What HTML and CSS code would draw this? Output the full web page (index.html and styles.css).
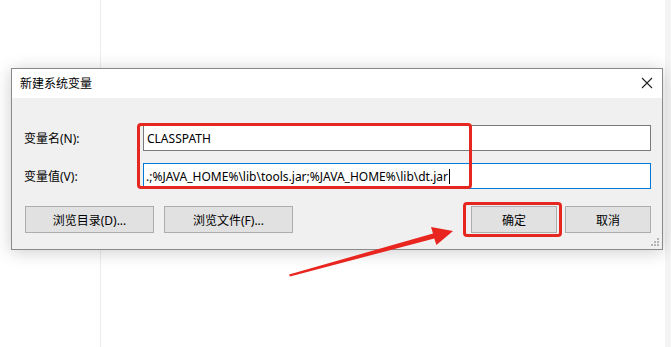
FILE: index.html
```html
<!DOCTYPE html>
<html lang="zh-CN">
<head>
<meta charset="utf-8">
<title>新建系统变量</title>
<link rel="stylesheet" href="styles.css">
</head>
<body>
<div class="dialog">
  <div class="titlebar">
    <span class="title">新建系统变量</span>
    <svg class="close" width="12" height="12" viewBox="0 0 12 12"><path d="M1 1L11 11M11 1L1 11" stroke="#222" stroke-width="1.1" fill="none"/></svg>
  </div>
  <div class="content">
    <div class="row">
      <span class="label">变量名(N):</span>
      <div class="input">CLASSPATH</div>
    </div>
    <div class="row">
      <span class="label">变量值(V):</span>
      <div class="input focused">.;%JAVA_HOME%\lib\tools.jar;%JAVA_HOME%\lib\dt.jar<span class="caret"></span></div>
    </div>
    <div class="buttons">
      <div class="btn wide">浏览目录(D)...</div>
      <div class="btn wide">浏览文件(F)...</div>
      <div class="spacer"></div>
      <div class="btn small">确定</div>
      <div class="btn small">取消</div>
    </div>
  </div>
  <div class="mark mark-inputs"></div>
  <div class="mark mark-ok"></div>
  <svg class="grip" width="8" height="8" viewBox="0 0 8 8"><g fill="#b5b5b5"><rect x="6" y="0" width="2" height="2"/><rect x="3" y="3" width="2" height="2"/><rect x="6" y="3" width="2" height="2"/><rect x="0" y="6" width="2" height="2"/><rect x="3" y="6" width="2" height="2"/><rect x="6" y="6" width="2" height="2"/></g></svg>
</div>
<svg class="arrow" width="671" height="347" viewBox="0 0 671 347"><polygon points="289,274.6 433,233.4 431,227 453,231 436.4,245 434.3,238.6 290,276.4" fill="#e8261f"/></svg>
</body>
</html>
```
FILE: styles.css
```css
html, body {
  margin: 0;
  padding: 0;
}
body {
  width: 671px;
  height: 347px;
  overflow: hidden;
  position: relative;
  background:
    linear-gradient(to right, transparent 100px, #ececec 100px, #ececec 101px, transparent 101px, transparent 665px, #f4f4f4 665px);
  font-family: "Noto Sans", "Noto Sans CJK SC", sans-serif;
  font-size: 12px;
  color: #000;
}
.dialog {
  position: relative;
  margin: 68px 0 0 11px;
  width: 650px;
  border: 1px solid #8a8a8a;
  background: #f0f0f0;
  box-shadow: 0 2px 16px rgba(0, 0, 0, 0.2);
}
.titlebar {
  height: 29px;
  background: #fff;
  display: flex;
  align-items: center;
  padding: 0 9px 0 8px;
  font-family: "Noto Sans CJK SC", sans-serif;
}
.title {
  flex: 1;
  line-height: 16px;
  padding-bottom: 1px;
}
.close {
  display: block;
  margin-top: -1px;
}
.content {
  padding: 27px 11px 16px 12px;
  display: flex;
  flex-direction: column;
  gap: 12px;
}
.row {
  display: flex;
  align-items: center;
  height: 26px;
}
.label {
  width: 119px;
  font-family: "Noto Sans", "Noto Sans CJK SC", sans-serif;
}
.input {
  flex: 1;
  height: 24px;
  border: 1px solid #7a7a7a;
  background: #fff;
  display: flex;
  align-items: center;
  padding-left: 3px;
  white-space: nowrap;
}
.input.focused {
  border-color: #0078d7;
  padding-left: 2px;
}
.caret {
  display: inline-block;
  width: 1px;
  height: 15px;
  background: #000;
  margin-left: 1px;
}
.buttons {
  display: flex;
  gap: 10px;
  margin-top: 5px;
  margin-left: 1px;
}
.spacer {
  flex: 1;
}
.btn {
  height: 25px;
  border: 1px solid #adadad;
  background: #e1e1e1;
  display: flex;
  align-items: center;
  justify-content: center;
  font-family: "Noto Sans", "Noto Sans CJK SC", sans-serif;
}
.btn.wide {
  width: 127px;
}
.btn.small {
  width: 84px;
  margin-left: -2px;
}
.mark {
  position: absolute;
  border: 3px solid #e5271f;
  border-radius: 4px;
}
.mark-inputs {
  left: 125px;
  top: 54px;
  width: 329px;
  height: 60px;
}
.mark-ok {
  left: 451px;
  top: 133px;
  width: 93px;
  height: 29px;
}
.grip {
  position: absolute;
  right: 3px;
  bottom: 3px;
}
.arrow {
  position: absolute;
  left: 0;
  top: 0;
}
```
